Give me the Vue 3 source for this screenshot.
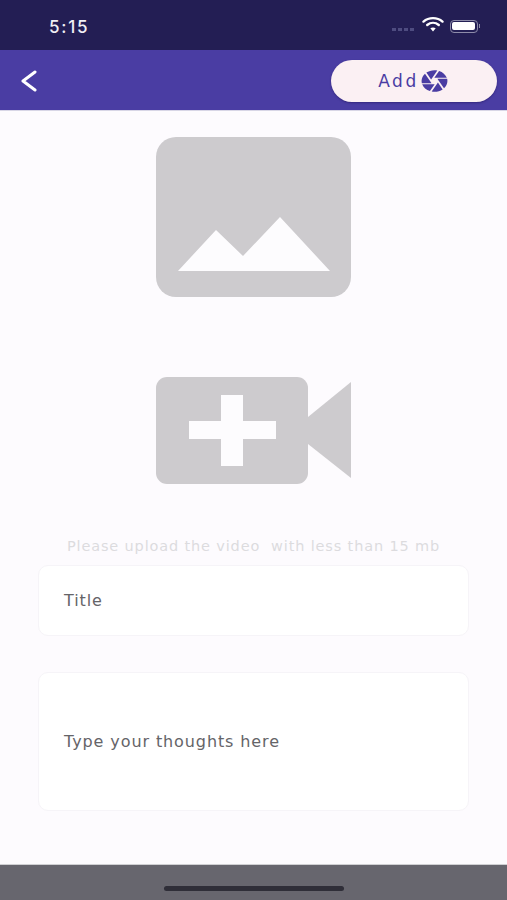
<script setup>
const hint = 'Please upload the video\u00a0 with less than 15 mb'
</script>

<template>
  <div class="screen">
    <div class="status">
      <span class="time">5:15</span>
      <div class="status-icons">
        <div class="dots"><i></i><i></i><i></i><i></i></div>
        <svg class="wifi" width="22" height="16" viewBox="0 0 22 16" fill="none" stroke="#fff" stroke-linecap="round">
          <path d="M1.500 5.600C6.800 1 15.200 1 20.500 5.600" stroke-width="2.400" />
          <path d="M5.200 9C8.600 6.200 13.400 6.200 16.800 9" stroke-width="2.400" />
          <path d="M11 15.500L8.300 12.300C9.900 11.200 12.100 11.200 13.700 12.300Z" fill="#fff" stroke="none" />
        </svg>
        <div class="battery"><div class="battery-fill"></div></div>
        <div class="battery-tip"></div>
      </div>
    </div>

    <header class="bar">
      <svg class="back" width="18" height="24" viewBox="0 0 18 24" fill="none" stroke="#fff" stroke-width="3" stroke-linecap="round" stroke-linejoin="round">
        <path d="M14 3L2 12L14 21" />
      </svg>
      <button class="add" type="button">
        <span>Add</span>
        <svg width="31" height="26" viewBox="0 0 24 24" preserveAspectRatio="none" fill="#4a3da3">
          <path d="M9.400 10.500l4.770-8.260C13.470 2.090 12.750 2 12 2c-2.400 0-4.600.85-6.320 2.250l3.660 6.350.06-.1zM21.540 9c-.92-2.920-3.150-5.260-6-6.340L11.880 9h9.660zm.26 1h-7.490l.29.5 4.760 8.250C21 16.970 22 14.610 22 12c0-.69-.07-1.350-.2-2zM8.540 12l-3.900-6.750C3.010 7.030 2 9.390 2 12c0 .69.07 1.350.2 2h7.490l-1.150-2zm-6.080 3c.92 2.920 3.150 5.260 6 6.340L12.120 15H2.460zm11.270 0l-3.900 6.760c.7.15 1.420.24 2.170.24 2.400 0 4.600-.85 6.320-2.250l-3.660-6.350-.93 1.600z" />
        </svg>
      </button>
    </header>

    <main class="content">
      <svg class="photo" width="195" height="160" viewBox="0 0 195 160">
        <rect width="195" height="160" rx="20" fill="#cdcbce" />
        <path d="M22 134L60 93L87 119L124 80L174 134Z" fill="#fdfcfe" />
      </svg>

      <svg class="video" width="195" height="107" viewBox="0 0 195 107">
        <rect width="152" height="107" rx="11" fill="#cdcbce" />
        <path d="M152 40L195 5V101L152 67Z" fill="#cdcbce" />
        <path d="M65 18H87V44H120V62H87V89H65V62H33V44H65Z" fill="#fdfcfe" />
      </svg>

      <p class="hint">{{ hint }}</p>

      <div class="field title">Title</div>
      <div class="field thoughts">Type your thoughts here</div>
    </main>

    <footer class="home"><div class="indicator"></div></footer>
  </div>
</template>

<style>
html, body { margin: 0; background: #fdfbfe; }
</style>

<style scoped>
.screen {
  width: 507px;
  height: 900px;
  display: flex;
  flex-direction: column;
  overflow: hidden;
  background: #fdfbfe;
  font-family: "DejaVu Sans", Inter, sans-serif;
}
.status {
  height: 50px;
  flex: none;
  box-sizing: border-box;
  background: #231e54;
  display: flex;
  align-items: center;
  justify-content: space-between;
  padding: 3px 27px 0 49px;
}
.time {
  color: #f1f0f5;
  font-family: Inter, sans-serif;
  font-size: 17px;
  font-weight: 500;
  letter-spacing: 1.800px;
  line-height: 20px;
}
.status-icons {
  display: flex;
  align-items: center;
}
.dots {
  display: flex;
  gap: 2.500px;
  margin-top: 6px;
  margin-right: 8px;
}
.dots i {
  width: 3.500px;
  height: 3px;
  background: #4e4c80;
}
.wifi { margin-right: 6px; margin-top: -5px; }
.battery {
  width: 28px;
  height: 13px;
  box-sizing: border-box;
  border: 1px solid #8e8caa;
  border-radius: 4px;
  padding: 1.500px;
  margin-top: -1px;
}
.battery-fill {
  width: 100%;
  height: 100%;
  background: #fff;
  border-radius: 2px;
}
.battery-tip {
  width: 1.500px;
  height: 4px;
  background: #8e8caa;
  margin-left: 1px;
  margin-top: -1px;
}
.bar {
  height: 61px;
  flex: none;
  box-sizing: border-box;
  background: #4a3da3;
  border-bottom: 1px solid #d8d6e6;
  display: flex;
  align-items: center;
  justify-content: space-between;
  padding: 0 10px 0 21px;
}
.back { margin-top: 1px; }
.add {
  width: 166px;
  height: 42px;
  margin-top: 2px;
  border: none;
  border-radius: 21px;
  background: #fbf0f3;
  box-shadow: 0 1px 2px rgba(30, 20, 90, 0.5);
  color: #4a3da3;
  font-family: inherit;
  font-size: 17px;
  letter-spacing: 2.500px;
  display: flex;
  align-items: center;
  justify-content: center;
  gap: 0;
  padding: 0;
}
.add svg { flex: none; }
.content {
  flex: 1;
  display: flex;
  flex-direction: column;
  align-items: center;
  padding-top: 26px;
}
.photo, .video { display: block; flex: none; }
.video { margin-top: 80px; }
.hint {
  margin: 54px 0 0;
  color: #dcdbde;
  font-size: 14.500px;
  line-height: 16px;
  letter-spacing: 0.850px;
  white-space: pre;
}
.field {
  width: 431px;
  box-sizing: border-box;
  background: #fff;
  border: 1px solid #f6f4f8;
  border-radius: 10px;
  display: flex;
  align-items: center;
  padding-left: 25px;
  color: #656468;
  font-size: 16px;
  letter-spacing: 0.900px;
}
.title { height: 71px; margin-top: 11px; }
.thoughts { height: 139px; margin-top: 36px; }
.home {
  height: 36px;
  flex: none;
  background: #67666e;
  border-top: 1px solid #d0d0d3;
  box-sizing: border-box;
  display: flex;
  justify-content: center;
  padding-top: 21px;
}
.indicator {
  width: 180px;
  height: 5px;
  border-radius: 3px;
  background: #2f2e38;
}
</style>
